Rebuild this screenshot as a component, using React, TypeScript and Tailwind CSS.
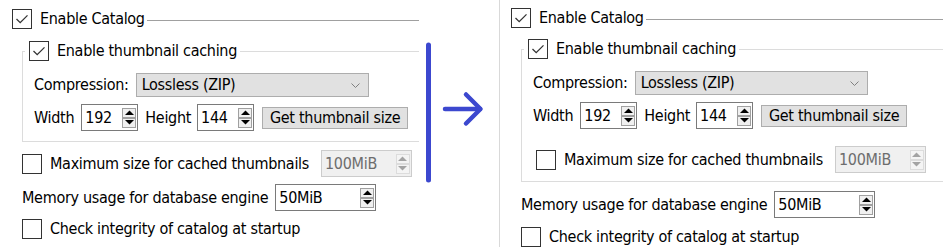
import React from "react";

function Check({ checked }: { checked?: boolean }) {
  return (
    <span className="flex h-[20px] w-[20px] shrink-0 items-center justify-center border border-[#333333] bg-white">
      {checked && (
        <svg width="18" height="18" viewBox="0 0 18 18">
          <path d="M3.5 9 L7.2 12.7 L14.5 5.4" fill="none" stroke="#333333" strokeWidth="1.3" />
        </svg>
      )}
    </span>
  );
}

function Arrow({ up, disabled }: { up?: boolean; disabled?: boolean }) {
  return (
    <span
      className={
        disabled
          ? "flex h-[10px] w-[14px] items-center justify-center border border-[#dcdcdc] bg-[#f4f4f4]"
          : "flex h-[10px] w-[14px] items-center justify-center border border-[#a0a0a0] bg-[#f0f0f0]"
      }
    >
      <svg width="9" height="5" viewBox="0 0 9 5">
        <polygon
          points={up ? "0,5 4.5,0.5 9,5" : "0,0 4.5,4.5 9,0"}
          fill={disabled ? "#a3a3a3" : "#000000"}
        />
      </svg>
    </span>
  );
}

function Spin({
  value,
  className,
  disabled,
}: {
  value: string;
  className: string;
  disabled?: boolean;
}) {
  return (
    <div
      className={`flex h-[27px] shrink-0 items-center justify-between border pl-[3px] pr-[1px] ${
        disabled ? "border-[#cccccc] bg-[#f0f0f0] text-[#6d6d6d]" : "border-[#7a7a7a] bg-white"
      } ${className}`}
    >
      <span>{value}</span>
      <div className="flex flex-col">
        <Arrow up disabled={disabled} />
        <Arrow disabled={disabled} />
      </div>
    </div>
  );
}

function MaxRow({ inside }: { inside?: boolean }) {
  return (
    <div
      className={
        inside
          ? "mt-[17px] flex items-center pl-[3px]"
          : "ml-[10px] mt-[8px] flex items-center"
      }
    >
      <Check />
      <span className="ml-[8px]">Maximum size for cached thumbnails</span>
      <Spin value="100MiB" className="ml-[12px] w-[91px]" disabled />
    </div>
  );
}

function Panel({ after }: { after?: boolean }) {
  return (
    <div>
      <div className="flex h-[20px] items-center">
        <Check checked />
        <span className="ml-[8px]">Enable Catalog</span>
        <div className="ml-[2px] mt-[2px] h-px flex-1 bg-[#a0a0a0]" />
      </div>

      <fieldset
        className={
          after
            ? "ml-[10px] mt-[11px] border border-r-0 border-[#dcdcdc] pb-[8px] pl-[11px]"
            : "ml-[10px] mt-[12px] border border-r-0 border-[#dcdcdc] pb-[10px] pl-[11px]"
        }
      >
        <legend className="ml-[-9px] flex items-center pl-[4px] pr-[3px]">
          <Check checked />
          <span className="ml-[8px]">Enable thumbnail caching</span>
        </legend>

        <div className="mt-[12px] flex items-center">
          <span>Compression:</span>
          <div className="ml-[7px] flex h-[24px] w-[233px] items-center justify-between border border-[#adadad] bg-[#e1e1e1] pl-[5px] pr-[8px]">
            <span>Lossless (ZIP)</span>
            <svg width="9" height="5" viewBox="0 0 9 5">
              <path d="M0.5 0.5 L4.5 4.5 L8.5 0.5" fill="none" stroke="#808080" strokeWidth="1" />
            </svg>
          </div>
        </div>

        <div className="mt-[7px] flex items-center">
          <span>Width</span>
          <Spin value="192" className="ml-[7px] w-[57px]" />
          <span className="ml-[7px]">Height</span>
          <Spin value="144" className="ml-[6px] w-[57px]" />
          <div className="ml-[8px] flex h-[22px] w-[146px] items-center justify-center border border-[#adadad] bg-[#e1e1e1]">
            Get thumbnail size
          </div>
        </div>

        {after && <MaxRow inside />}
      </fieldset>

      {!after && <MaxRow />}

      <div className={after ? "ml-[10px] mt-[9px] flex items-center" : "ml-[10px] mt-[7px] flex items-center"}>
        <span>Memory usage for database engine</span>
        <Spin value="50MiB" className="ml-[7px] w-[101px]" />
      </div>

      <div className={after ? "ml-[10px] mt-[9px] flex items-center" : "ml-[10px] mt-[8px] flex items-center"}>
        <Check />
        <span className="ml-[8px]">Check integrity of catalog at startup</span>
      </div>
    </div>
  );
}

export default function App() {
  return (
    <div className="flex h-[247px] w-[943px] overflow-hidden bg-white font-['DejaVu_Sans_Condensed','DejaVu_Sans',sans-serif] text-[16px] leading-[20px] tracking-[-0.3px] text-black [font-stretch:condensed]">
      <div className="w-[419px] shrink-0 overflow-hidden pl-[12px] pt-[9px]">
        <Panel />
      </div>

      <div className="w-[80px] shrink-0">
        <svg width="80" height="247" viewBox="0 0 80 247">
          <line x1="9.5" y1="45" x2="9.5" y2="180" stroke="#3c48cf" strokeWidth="5" strokeLinecap="round" />
          <line x1="26" y1="109" x2="61" y2="109" stroke="#3c48cf" strokeWidth="4.5" strokeLinecap="round" />
          <path
            d="M47 94.5 L61.5 109 L47 123.5"
            fill="none"
            stroke="#3c48cf"
            strokeWidth="4.5"
            strokeLinecap="round"
            strokeLinejoin="round"
          />
        </svg>
      </div>

      <div className="min-w-0 flex-1 overflow-hidden border-l border-[#d9d9d9] pl-[11px] pt-[8px]">
        <Panel after />
      </div>
    </div>
  );
}
